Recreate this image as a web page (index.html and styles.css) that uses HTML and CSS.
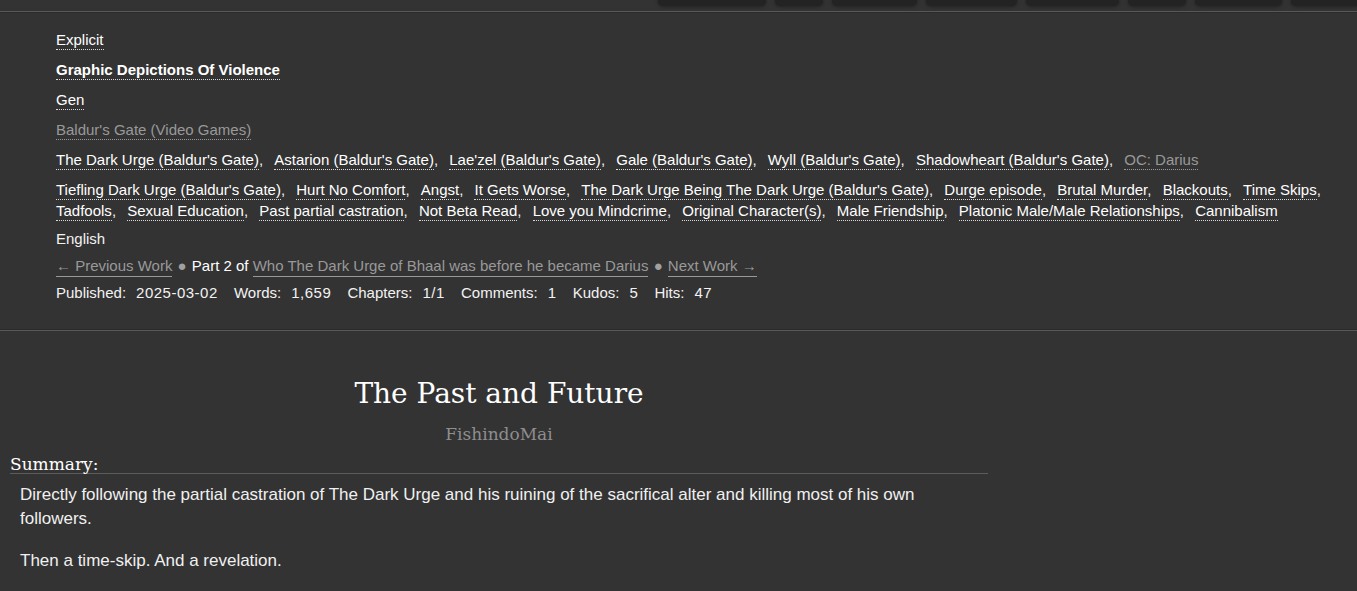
FILE: index.html
```html
<!DOCTYPE html>
<html lang="en">
<head>
    <meta charset="UTF-8">
    <title>The Past and Future - FishindoMai</title>
    <link rel="stylesheet" href="styles.css">
</head>
<body>

    <!-- work navigation buttons (scrolled past) -->
    <ul class="work-navigation">
        <li></li>
        <li></li>
        <li></li>
        <li></li>
        <li></li>
        <li></li>
        <li></li>
        <li></li>
    </ul>

    <!-- work meta -->
    <dl class="work-meta">
        <dd class="rating"><a class="tag" href="#">Explicit</a></dd>
        <dd class="warning"><a class="tag strong" href="#">Graphic Depictions Of Violence</a></dd>
        <dd class="category"><a class="tag" href="#">Gen</a></dd>
        <dd class="fandom"><a class="tag visited" href="#">Baldur's Gate (Video Games)</a></dd>
        <dd class="character">
            <ul class="commas">
                <li><a class="tag" href="#">The Dark Urge (Baldur's Gate)</a></li>
                <li><a class="tag" href="#">Astarion (Baldur's Gate)</a></li>
                <li><a class="tag" href="#">Lae'zel (Baldur's Gate)</a></li>
                <li><a class="tag" href="#">Gale (Baldur's Gate)</a></li>
                <li><a class="tag" href="#">Wyll (Baldur's Gate)</a></li>
                <li><a class="tag" href="#">Shadowheart (Baldur's Gate)</a></li>
                <li><a class="tag visited" href="#">OC: Darius</a></li>
            </ul>
        </dd>
        <dd class="freeform">
            <ul class="commas">
                <li><a class="tag" href="#">Tiefling Dark Urge (Baldur's Gate)</a></li>
                <li><a class="tag" href="#">Hurt No Comfort</a></li>
                <li><a class="tag" href="#">Angst</a></li>
                <li><a class="tag" href="#">It Gets Worse</a></li>
                <li><a class="tag" href="#">The Dark Urge Being The Dark Urge (Baldur's Gate)</a></li>
                <li><a class="tag" href="#">Durge episode</a></li>
                <li><a class="tag" href="#">Brutal Murder</a></li>
                <li><a class="tag" href="#">Blackouts</a></li>
                <li><a class="tag" href="#">Time Skips</a></li>
                <li><a class="tag" href="#">Tadfools</a></li>
                <li><a class="tag" href="#">Sexual Education</a></li>
                <li><a class="tag" href="#">Past partial castration</a></li>
                <li><a class="tag" href="#">Not Beta Read</a></li>
                <li><a class="tag" href="#">Love you Mindcrime</a></li>
                <li><a class="tag" href="#">Original Character(s)</a></li>
                <li><a class="tag" href="#">Male Friendship</a></li>
                <li><a class="tag" href="#">Platonic Male/Male Relationships</a></li>
                <li><a class="tag" href="#">Cannibalism</a></li>
            </ul>
        </dd>
        <dd class="language">English</dd>
        <dd class="series">
            <a class="previous" href="#">&larr; Previous Work</a>
            <span class="divider">&#9679;</span>
            <span class="position">Part 2 of <a href="#">Who The Dark Urge of Bhaal was before he became Darius</a></span>
            <span class="divider">&#9679;</span>
            <a class="next" href="#">Next Work &rarr;</a>
        </dd>
        <dd class="stats">
            <span>Published:</span><span class="value">2025-03-02</span>
            <span>Words:</span><span class="value">1,659</span>
            <span>Chapters:</span><span class="value">1/1</span>
            <span>Comments:</span><span class="value">1</span>
            <span>Kudos:</span><span class="value">5</span>
            <span>Hits:</span><span class="value">47</span>
        </dd>
    </dl>

    <!-- preface -->
    <div class="preface">
        <h2 class="title">The Past and Future</h2>
        <h3 class="byline"><a href="#">FishindoMai</a></h3>
        <div class="summary">
            <h3 class="heading">Summary:</h3>
            <blockquote class="userstuff">
                <p>Directly following the partial castration of The Dark Urge and his ruining of the sacrifical alter and killing most of his own followers.</p>
                <p>Then a time-skip. And a revelation.</p>
            </blockquote>
        </div>
    </div>

</body>
</html>
```

FILE: styles.css
```css
/* base */
body {
    margin: 0;
    background-color: #333333;
    color: #f2f2f2;
    font-family: 'Liberation Sans', Arial, sans-serif;
    font-size: 15px;
}

a {
    color: inherit;
    text-decoration: none;
}

/* buttons at the very top */
.work-navigation {
    display: flex;
    justify-content: flex-end;
    gap: 9px;
    height: 11px;
    margin: 0;
    padding: 0;
    list-style: none;
    overflow: hidden;
}

.work-navigation li {
    height: 6px;
    background-color: #232323;
    border-radius: 0 0 5px 5px;
    box-shadow: 0 0 4px rgba(0, 0, 0, 0.5);
    flex-shrink: 0;
}

.work-navigation li:nth-child(1) { width: 108px; }
.work-navigation li:nth-child(2) { width: 48px; }
.work-navigation li:nth-child(3) { width: 85px; }
.work-navigation li:nth-child(4) { width: 91px; }
.work-navigation li:nth-child(5) { width: 93px; }
.work-navigation li:nth-child(6) { width: 58px; }
.work-navigation li:nth-child(7) { width: 87px; }
.work-navigation li:nth-child(8) { width: 69px; margin-right: -3px; }

/* meta block */
.work-meta {
    margin: 0;
    padding: 17px 20px 27px 56px;
    border-top: 1px solid #585858;
    border-bottom: 1px solid #585858;
    box-shadow: inset 0 1px 0 #2b2b2b, inset 0 -1px 0 #2b2b2b;
    line-height: 21px;
}

.work-meta dd {
    margin: 0 0 9px;
}

.work-meta .freeform {
    margin-bottom: 7px;
}

.work-meta .language,
.work-meta .series {
    margin-bottom: 6px;
}

.work-meta .stats {
    margin-bottom: 0;
}

.tag {
    color: #ffffff;
    border-bottom: 1px dotted #d8d8d8;
    padding-bottom: 1px;
}

.tag.strong {
    font-weight: bold;
}

.tag.visited {
    color: #999999;
    border-bottom-color: #999999;
}

ul.commas {
    display: inline;
    margin: 0;
    padding: 0;
    list-style: none;
}

ul.commas li {
    display: inline;
    margin-right: 7px;
}

ul.commas li::after {
    content: ",";
}

ul.commas li:last-child::after {
    content: "";
}

/* series navigation */
.series a {
    color: #999999;
    border-bottom: 1px solid #999999;
    padding-bottom: 2px;
}

.series .divider {
    color: #a0a0a0;
    font-size: 15px;
    margin: 0 1px;
}

.series .position {
    color: #ffffff;
}

/* stats */
.stats .value {
    margin: 0 12px 0 10px;
    letter-spacing: 0.5px;
}

/* preface */
.preface {
    width: 978px;
    margin: 0 0 0 10px;
    font-family: 'DejaVu Serif', Georgia, serif;
}

.preface .title {
    margin: 43px 0 0;
    text-align: center;
    font-size: 28px;
    font-weight: normal;
    line-height: 40px;
    color: #ffffff;
}

.preface .byline {
    margin: 8px 0 0;
    text-align: center;
    font-size: 17px;
    font-weight: normal;
    line-height: 24px;
    color: #8e8e8e;
}

.summary .heading {
    margin: 9px 0 0;
    font-size: 17px;
    font-weight: normal;
    line-height: 18px;
    color: #ffffff;
    border-bottom: 1px solid #5c5c5c;
}

.summary blockquote {
    margin: 0;
    padding: 9px 10px 0;
    font-family: 'Liberation Sans', Arial, sans-serif;
    font-size: 17px;
    line-height: 24px;
    color: #f0f0f0;
}

.summary blockquote p {
    margin: 0 0 18px;
}
```
